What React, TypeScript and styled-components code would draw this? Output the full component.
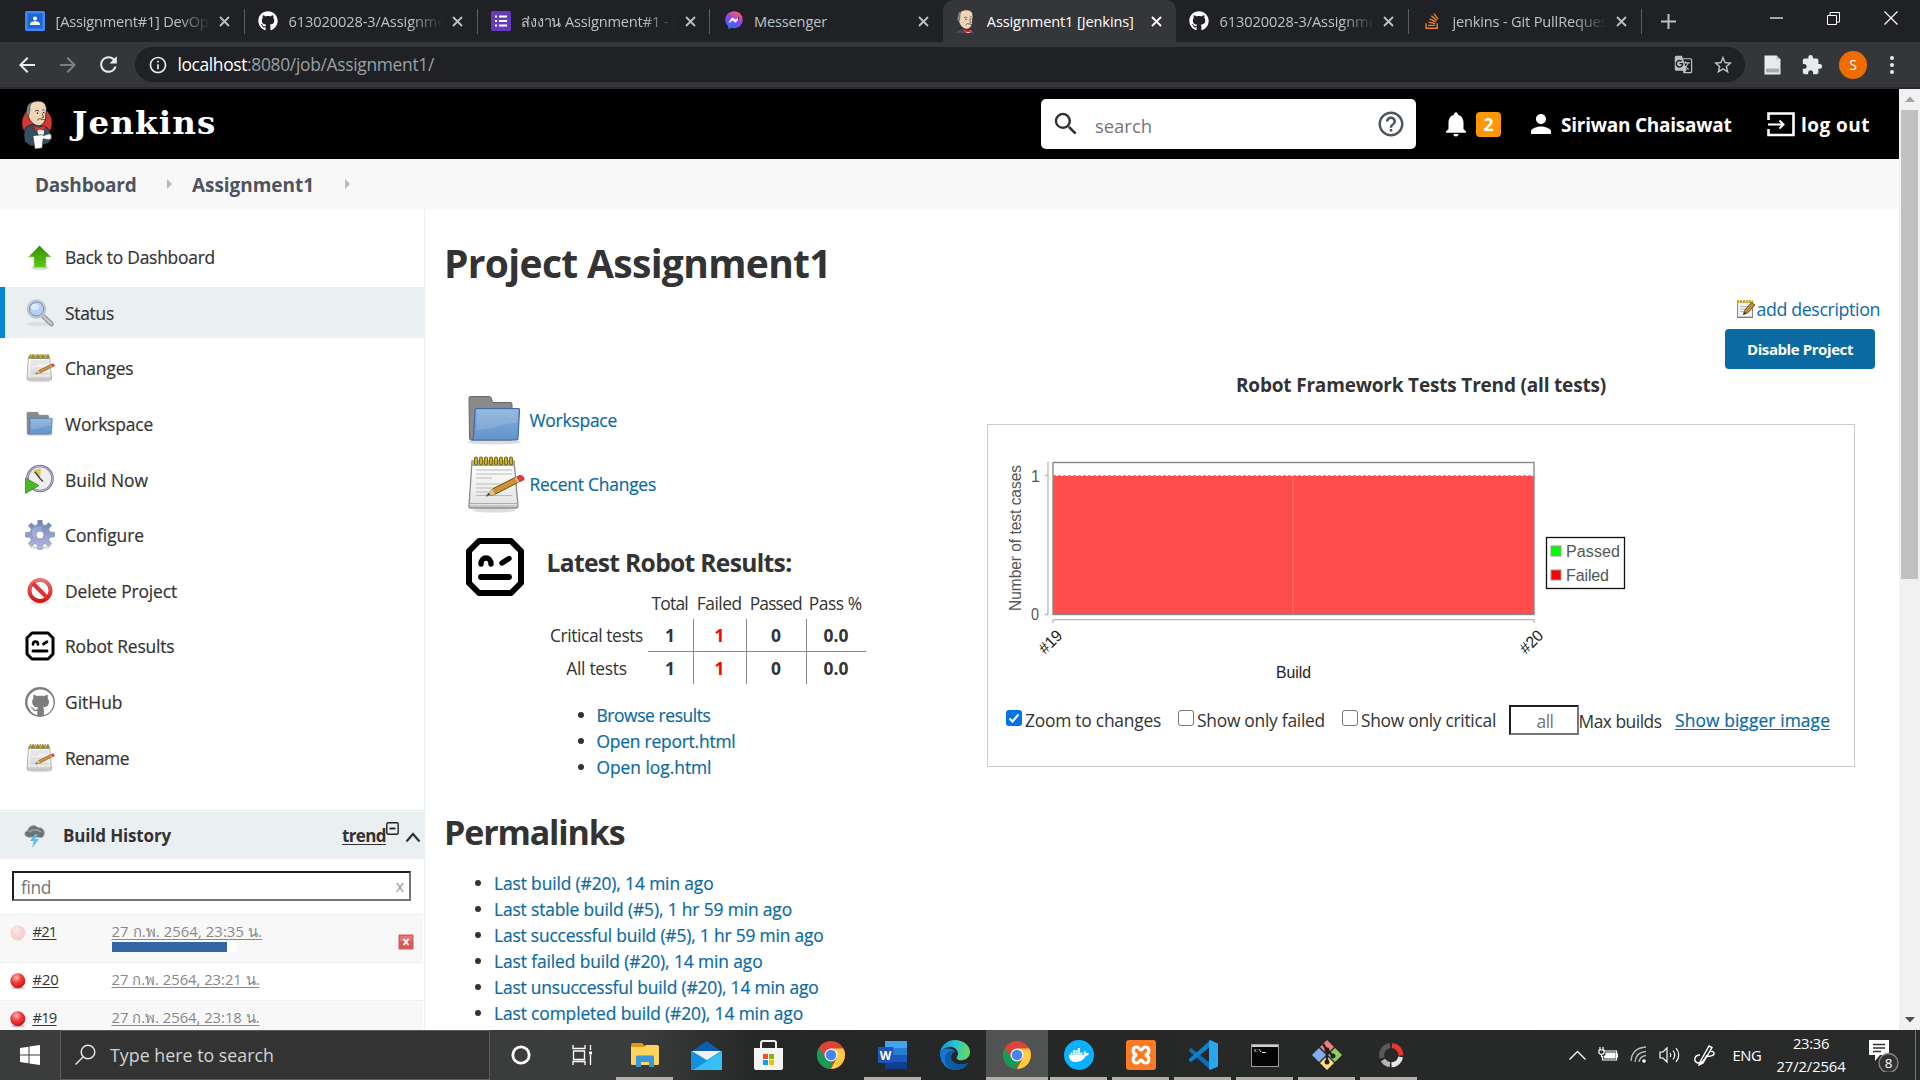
import React, { useLayoutEffect, useRef, useState } from 'react';
import styled, { createGlobalStyle, css } from 'styled-components';
import { FaGithub, FaStackOverflow, FaDocker, FaFacebookMessenger } from 'react-icons/fa';
import { MdGTranslate, MdStarBorder, MdExtension, MdNotifications, MdPerson, MdSearch, MdHelpOutline, MdRefresh, MdInfoOutline, MdArrowBack, MdArrowForward } from 'react-icons/md';

const GlobalStyle = createGlobalStyle`
  * { box-sizing: border-box; }
  body { margin: 0; background: #fff; overflow: hidden; }
  body, input, button { font-family: 'Open Sans', 'Noto Sans', 'DejaVu Sans', sans-serif; }
  svg { display: block; flex: none; }
`;

/* ---------- text that keeps a set measure by tracking ---------- */

const Measured = styled.span`
  display: inline-block;
  white-space: pre;
  text-decoration: inherit;
`;

function Text({ w, children }: { w: number; children: string }) {
  const ref = useRef<HTMLSpanElement>(null);
  const [tracking, setTracking] = useState(0);
  useLayoutEffect(() => {
    const el = ref.current;
    if (!el) return;
    const range = document.createRange();
    range.selectNodeContents(el);
    const natural = range.getBoundingClientRect().width - tracking * children.length;
    setTracking((w - natural) / children.length);
  }, [w, children]);
  return (
    <Measured ref={ref} style={{ letterSpacing: `${tracking}px` }}>
      {children}
    </Measured>
  );
}

/* ---------- window ---------- */

const Screen = styled.div`
  width: 1920px;
  height: 1080px;
  display: flex;
  flex-direction: column;
  overflow: hidden;
  color: #333;
`;

const TabStrip = styled.div`
  height: 42px;
  flex: none;
  display: flex;
  background: #202124;
  padding-left: 12px;
`;

const Tab = styled.div<{ $active?: boolean; $divider?: boolean }>`
  width: 232.8px;
  flex: none;
  display: flex;
  align-items: center;
  padding-left: 13px;
  font-size: 14.6px;
  line-height: 24px;
  color: ${(p) => (p.$active ? '#fff' : '#bdc1c6')};
  background: ${(p) =>
    p.$active ? '#35363a' : p.$divider ? 'linear-gradient(#5a5c60, #5a5c60) right 9px / 1px 25px no-repeat' : 'transparent'};
  border-radius: ${(p) => (p.$active ? '10px 10px 0 0' : '0')};
`;

const TabTitle = styled.span<{ $fade?: boolean }>`
  width: 156px;
  margin-left: 10.6px;
  overflow: hidden;
  white-space: nowrap;
  ${(p) =>
    p.$fade &&
    css`
      mask-image: linear-gradient(90deg, #000 78%, transparent 99%);
    `}
`;

const IconSlot = styled.span<{ $w: number; $h?: number; $ml?: number }>`
  width: ${(p) => p.$w}px;
  height: ${(p) => p.$h ?? p.$w}px;
  margin-left: ${(p) => p.$ml ?? 0}px;
  flex: none;
  display: flex;
  align-items: center;
  justify-content: center;
`;

const NewTab = styled.div`
  width: 54px;
  display: flex;
  align-items: center;
  justify-content: center;
`;

const WindowButtons = styled.div`
  margin-left: auto;
  margin-right: 1px;
  display: flex;
  height: 36px;
`;

const WindowButton = styled.div`
  width: 57px;
  display: flex;
  align-items: center;
  justify-content: center;
`;

const Toolbar = styled.div`
  height: 47px;
  flex: none;
  display: flex;
  align-items: center;
  background: #35363a;
  border-bottom: 2px solid #28292c;
  color: #e8eaed;
`;

const Omnibox = styled.div`
  width: 1610px;
  height: 35px;
  margin-left: 15px;
  border-radius: 18px;
  background: #202124;
  display: flex;
  align-items: center;
  font-size: 17.4px;
  line-height: 35px;
  color: #9aa0a6;
`;

const Host = styled.span`
  margin-left: 10px;
  color: #fff;
`;

const OmniIcons = styled.div`
  margin-left: auto;
  display: flex;
  gap: 18px;
  padding-right: 11px;
  color: #bdc1c6;
`;

const Avatar = styled.div`
  width: 28px;
  height: 28px;
  margin-left: 16px;
  border-radius: 50%;
  background: #ef6c00;
  color: #fff;
  font-size: 14px;
  line-height: 28px;
  text-align: center;
`;

/* ---------- page ---------- */

const Viewport = styled.div`
  height: 941px;
  flex: none;
  display: flex;
`;

const Page = styled.div`
  width: 1899px;
  height: 941px;
  overflow: hidden;
  display: flex;
  flex-direction: column;
  background: #fff;
`;

const Scrollbar = styled.div`
  width: 21px;
  background: #f1f1f1;
  display: flex;
  flex-direction: column;
  align-items: center;
`;

const ScrollArrow = styled.div<{ $down?: boolean }>`
  height: 21px;
  display: flex;
  align-items: center;
  transform: ${(p) => (p.$down ? 'none' : 'rotate(180deg)')};
  color: ${(p) => (p.$down ? '#505050' : '#a3a3a3')};
`;

const ScrollThumb = styled.div`
  width: 17px;
  height: 469px;
  margin-bottom: auto;
  background: #c1c1c1;
`;

const Header = styled.header`
  height: 70px;
  flex: none;
  display: flex;
  align-items: center;
  background: #000;
  color: #fff;
  font-size: 19px;
  font-weight: 700;
  padding-left: 19px;
`;

const Wordmark = styled.span`
  margin-left: 17px;
  font: 700 32.5px/44px 'DejaVu Serif', serif;
  padding-bottom: 3px;
`;

const SearchBox = styled.div`
  width: 375px;
  height: 50px;
  margin-left: auto;
  border-radius: 5px;
  background: #fff;
  color: #757575;
  font-weight: 400;
  display: flex;
  align-items: center;
  padding: 0 11px 0 10px;
`;

const SearchHint = styled.span`
  margin-left: 14px;
  margin-right: auto;
  padding-top: 2px;
  font-size: 18.4px;
`;

const Badge = styled.span`
  width: 25px;
  height: 25px;
  margin-left: 7px;
  border-radius: 4px;
  background: #ff9800;
  font-size: 17.5px;
  line-height: 25px;
  text-align: center;
`;

const HeaderLink = styled.span<{ $gap: number; $end?: number }>`
  display: flex;
  margin-left: ${(p) => p.$gap}px;
  margin-right: ${(p) => p.$end ?? 0}px;
  padding-top: 1px;
`;

const Breadcrumbs = styled.nav`
  height: 50px;
  flex: none;
  display: flex;
  align-items: center;
  padding: 1px 0 0 35px;
  background: #f8f8f8;
  color: #4d545d;
  font-size: 19px;
  font-weight: 700;
`;

const CrumbArrow = styled.span`
  margin: 0 20px 1px 30.5px;
  border-left: 5px solid #b8bcc0;
  border-top: 5px solid transparent;
  border-bottom: 5px solid transparent;
`;

const Body = styled.div`
  flex: 1;
  display: flex;
  min-height: 0;
`;

const Sidebar = styled.aside`
  width: 425px;
  flex: none;
  border-right: 1px solid #eaeff2;
`;

const Tasks = styled.div`
  height: 601px;
  padding-top: 22.4px;
  display: flex;
  flex-direction: column;
  gap: 4.65px;
`;

const Task = styled.div<{ $active?: boolean }>`
  height: 51px;
  display: flex;
  align-items: center;
  padding-left: 20px;
  border-left: 5px solid ${(p) => (p.$active ? '#0b86d3' : 'transparent')};
  background: ${(p) => (p.$active ? '#eaeff2' : 'transparent')};
  font-size: 17.4px;
  -webkit-text-stroke: 0.2px;
`;

const TaskLabel = styled.span`
  margin-left: 10px;
  padding-top: 0.2px;
`;

const HistoryHead = styled.div`
  height: 49px;
  border-top: 1px solid #e6eef0;
  display: flex;
  flex-direction: column;
  padding-top: 1px;
`;

const HistoryBar = styled.div`
  flex: 1;
  display: flex;
  align-items: center;
  padding-left: 24px;
  padding-right: 2px;
  background: #eaeff2;
  font-size: 17px;
  font-weight: 700;
`;

const HistoryTitle = styled.span`
  margin-left: 17px;
`;

const Trend = styled.a`
  margin-left: auto;
  text-decoration: underline;
  text-underline-offset: 2px;
`;

const Sup = styled.span`
  height: 28px;
  margin: 0 6px 0 0;
`;

const FindRow = styled.div`
  height: 55px;
  padding: 12px 13px 0 12px;
`;

const FindBox = styled.div`
  height: 30px;
  border: 2px solid;
  border-color: #1e1e1e #767676 #767676 #1e1e1e;
  display: flex;
  align-items: center;
  justify-content: space-between;
  padding: 1px 5px 0 7px;
  font-size: 17.4px;
  line-height: 22px;
  color: #757575;
`;

const Clear = styled.span`
  font-size: 16px;
  line-height: 20px;
  padding-bottom: 2px;
  color: #999;
`;

const BuildRow = styled.div<{ $h: number; $odd?: boolean }>`
  width: 423px;
  height: ${(p) => p.$h}px;
  display: flex;
  padding: 8px 9px 0;
  border-top: 1px solid #eaeff2;
  background: ${(p) => (p.$odd ? '#f8f8f8' : '#fff')};
  font-size: 14.8px;
  line-height: 16px;
`;

const BuildNumber = styled.a`
  width: 79px;
  margin-left: 6.5px;
  text-decoration: underline;
  text-underline-offset: 2px;
`;

const BuildDate = styled.a`
  color: #888;
  text-decoration: underline;
  text-underline-offset: 2px;
`;

const Progress = styled.div`
  width: 125px;
  height: 10px;
  margin-top: 3px;
  background: linear-gradient(90deg, #3465a4 92%, #fff 92%);
`;

const StopSlot = styled.span`
  margin: 11px 0 0 auto;
`;

const Main = styled.main`
  flex: 1;
  padding: 24px 19px 0 19px;
`;

const Title = styled.h1`
  margin: 0;
  height: 60px;
  font-size: 39px;
  line-height: 60px;
`;

const Description = styled.div`
  height: 32px;
  display: flex;
  align-items: center;
  justify-content: flex-end;
  gap: 1px;
  color: #0b6aa2;
  font-size: 17.8px;
`;

const DisableRow = styled.div`
  display: flex;
  justify-content: flex-end;
  padding: 4px 5px 0 0;
`;

const DisableButton = styled.button`
  width: 150px;
  height: 40px;
  padding: 0;
  border: 0;
  border-radius: 4px;
  background: #0b6aa2;
  color: #fff;
  font-size: 15px;
  font-weight: 700;
`;

const Columns = styled.div`
  display: flex;
  height: 411.4px;
`;

const LeftColumn = styled.div`
  width: 543px;
  padding: 19.4px 0 0 21px;
  font-size: 17.4px;
`;

const ShortcutRow = styled.div`
  height: 64px;
  display: flex;
  align-items: center;
  gap: 4.5px;
  color: #0b6aa2;
  -webkit-text-stroke: 0.2px;
`;

const RobotBlock = styled.div`
  display: flex;
  margin-top: 20.6px;
`;

const RobotBody = styled.div`
  margin-left: 21px;
`;

const RobotTitle = styled.h2`
  margin: 0 0 0 0.5px;
  padding-top: 1px;
  height: 51px;
  font-size: 24.6px;
  line-height: 50px;
`;

const Results = styled.div`
  display: grid;
  grid-template-columns: 102px 46px 53px 60px 59px;
  grid-template-rows: 31px 33px 32.5px;
`;

const Cell = styled.span<{ $right?: boolean; $bottom?: boolean; $strong?: boolean; $failed?: boolean }>`
  display: flex;
  align-items: center;
  justify-content: center;
  padding-right: 1px;
  border-right: ${(p) => (p.$right ? '1px solid #888' : '0')};
  border-bottom: ${(p) => (p.$bottom ? '1px solid #888' : '0')};
  font-weight: ${(p) => (p.$strong ? 700 : 400)};
  color: ${(p) => (p.$failed ? '#f00' : 'inherit')};
`;

const HeadCell = styled(Cell)`
  padding-right: 2.5px;
`;

const Links = styled.ul<{ $indent: number; $top: number }>`
  list-style: none;
  margin: ${(p) => p.$top}px 0 0 ${(p) => p.$indent}px;
  padding: 0;
  font-size: 17.4px;
  -webkit-text-stroke: 0.2px;
  line-height: 26px;
  color: #0b6aa2;
`;

const LinkItem = styled.li`
  display: flex;
  align-items: center;
  height: 26px;
  &::before {
    content: '';
    width: 6px;
    height: 6px;
    margin-right: 13px;
    border-radius: 50%;
    background: #333;
  }
`;

const PermalinksTitle = styled.h2`
  margin: 26.4px 0 0;
  height: 50px;
  font-size: 34px;
  line-height: 50px;
`;

const TrendPanel = styled.section`
  width: 868px;
`;

const TrendTitle = styled.div`
  height: 31px;
  margin-bottom: 24px;
  font-size: 19px;
  line-height: 33px;
  font-weight: 700;
  text-align: center;
`;

const Card = styled.div`
  height: 343px;
  border: 1px solid #ccc;
  padding: 26px 0 0 17px;
`;

const Options = styled.div`
  display: flex;
  align-items: center;
  height: 40px;
  margin-top: 5.5px;
  font-size: 17.4px;
`;

const Check = styled.input`
  appearance: none;
  width: 16px;
  height: 16px;
  margin: 0 3.5px 4px 0;
  border: 1px solid #767676;
  border-radius: 3px;
  background: #fff;
`;

const CheckLabel = styled.label`
  display: flex;
  align-items: center;
  margin-right: 16.5px;
`;

const CheckMark = styled.span`
  display: flex;
  width: 16px;
  height: 16px;
  margin: 0 3px 4px 1px;
  border-radius: 3px;
  background: #0075e8;
`;

const MaxInput = styled.div`
  width: 70px;
  height: 30px;
  margin-left: -4px;
  border: 2px solid;
  border-color: #1e1e1e #767676 #767676 #1e1e1e;
  color: #757575;
  line-height: 29px;
  padding-left: 26px;
`;

const MaxLabel = styled.span`
  padding-top: 2px;
`;

const BiggerLink = styled.a`
  margin-left: 13.5px;
  color: #0b6aa2;
  -webkit-text-stroke: 0.2px;
  text-decoration: underline;
  text-underline-offset: 2px;
`;

/* ---------- taskbar ---------- */

const Taskbar = styled.div`
  height: 50px;
  flex: none;
  display: flex;
  background: linear-gradient(90deg, #3b3c3c 0, #3b3c3c 640px, #252727 760px, #292b2b 100%);
  color: #fff;
`;

const StartButton = styled.div`
  width: 60px;
  display: flex;
  align-items: center;
  justify-content: center;
`;

const TaskSearch = styled.div`
  width: 430px;
  border: 1px solid #5c5c5c;
  background: #333;
  color: #d4d4d4;
  display: flex;
  align-items: center;
  gap: 14px;
  padding-left: 13px;
  font-size: 17.8px;
`;

const AppButton = styled.div<{ $running?: boolean; $active?: boolean }>`
  width: 62px;
  flex: none;
  display: flex;
  align-items: center;
  justify-content: center;
  border-bottom: 3px solid transparent;
  padding: 3px 1px 0 0;
  background: ${(p) => (p.$active ? '#515252' : 'transparent')};
  ${(p) =>
    p.$running &&
    css`
      border-image: linear-gradient(90deg, transparent 5px, #b2aeac 5px, #b2aeac 56px, transparent 56px) 3;
    `}
  ${(p) =>
    p.$active &&
    css`
      border-bottom-color: #b2aeac;
    `}
`;

const Tray = styled.div`
  margin-left: auto;
  display: flex;
  align-items: center;
  padding-right: 4px;
  font-size: 14.8px;
`;

const Clock = styled.div`
  width: 72px;
  margin: 0 22px 0 13px;
  text-align: center;
  line-height: 23px;
`;

const ShowDesktop = styled.div`
  width: 1px;
  height: 50px;
  margin-left: 15px;
  background: #777;
`;

/* ---------- drawings ---------- */

const CloseX = ({ c = '#bdc1c6' }: { c?: string }) => (
  <svg width="11" height="11" viewBox="0 0 11 11" stroke={c} strokeWidth="1.8">
    <path d="M1 1l9 9M10 1l-9 9" />
  </svg>
);

const Butler = ({ w, h, bust }: { w: number; h: number; bust?: boolean }) => (
  <svg width={w} height={h} viewBox={bust ? '5 0 25 30' : '0 0 34 48'} preserveAspectRatio="xMidYMid meet">
    {!bust && <ellipse cx="17" cy="22.5" rx="14.5" ry="15.5" fill="#d33833" />}
    <path d="M5 41c-1-6-1-11 1-14 2-2 5-3 9-3l9 2c4 1 6 4 6 8l1 5-3 3-8 3h-9z" fill="#335061" stroke="#111" strokeWidth=".7" />
    <path d="M16 26l5 3 4-3-2 10h-4z" fill="#f2f2f2" />
    <path d="M8 14C6 6 11 1 18 1c7 0 9 5 8 11-1 3 0 5-1 8-2 4-5 6-8 5-4-1-8-5-9-11z" fill="#f0d6b7" stroke="#222" strokeWidth=".9" />
    <path d="M9 15c-3 1-3-3-2-5 0-4 2-7 5-8-2 3-2 5-2 8z" fill="#8a888a" stroke="#222" strokeWidth=".5" />
    <path d="M15 11q2-2 4 0M22 10q1.500-1 2.500 0M17 20q2-3 5-1l3 .5M22 13l1.500 4-2 .5" stroke="#49414b" strokeWidth=".9" fill="none" />
    <circle cx="17.500" cy="12.800" r=".8" fill="#222" />
    <circle cx="23.500" cy="12.300" r=".8" fill="#222" />
    <path d="M14 25l5 2 5-2 1 5-5-1.500-5 2z" fill="#d33833" stroke="#811" strokeWidth=".5" />
    {!bust && <path d="M13 35l9-1 1 1 6-2 2 1v4l-3 1-5-1-1 9-7 1z" fill="#fff" stroke="#333" strokeWidth=".6" />}
  </svg>
);

const ClassroomIcon = () => (
  <svg width="20" height="20" viewBox="0 0 20 20">
    <rect width="20" height="20" rx="1.5" fill="#4285f4" />
    <rect x="2.5" y="2.5" width="15" height="15" fill="#1967d2" />
    <circle cx="10" cy="7.6" r="2" fill="#fff" />
    <path d="M5 14c0-3 2.500-3.700 5-3.700s5 .7 5 3.700z" fill="#fff" />
  </svg>
);

const FormsIcon = () => (
  <svg width="20" height="20" viewBox="0 0 20 20">
    <rect width="20" height="20" rx="1.5" fill="#673ab7" />
    <path d="M4 5.500h2M8 5.500h8M4 10h2M8 10h8M4 14.500h2M8 14.500h8" stroke="#fff" strokeWidth="2.200" />
  </svg>
);

const MessengerIcon = () => (
  <svg width="20" height="20" viewBox="0 0 20 20">
    <defs>
      <linearGradient id="msg" x1=".2" y1="1" x2=".7" y2="0">
        <stop offset="0" stopColor="#0a84ff" />
        <stop offset=".5" stopColor="#8a3ff5" />
        <stop offset="1" stopColor="#ff5f70" />
      </linearGradient>
    </defs>
    <path d="M5 6h10v8H5z" fill="#fff" />
    <FaFacebookMessenger x={2} size={18} fill="url(#msg)" />
  </svg>
);

const ArrowUpIcon = () => (
  <svg width="30" height="30" viewBox="0 0 30 30">
    <defs>
      <linearGradient id="up" x1="0" y1="0" x2="0" y2="1">
        <stop offset="0" stopColor="#2f8f08" />
        <stop offset="1" stopColor="#5fc80f" />
      </linearGradient>
    </defs>
    <ellipse cx="15" cy="26" rx="9" ry="2" fill="#0002" />
    <path d="M14.500 3.500L26 15h-5v10.500H9V15H3.500z" fill="url(#up)" stroke="#9fd58a" strokeWidth=".8" />
  </svg>
);

const MagnifierIcon = () => (
  <svg width="30" height="30" viewBox="0 0 30 30">
    <ellipse cx="13" cy="26" rx="11" ry="2.300" fill="#0001" />
    <path d="M18 18l8.500 8" stroke="#8a8a8a" strokeWidth="4.500" strokeLinecap="round" />
    <path d="M18 18l8.500 8" stroke="#c9c9c9" strokeWidth="2.500" strokeLinecap="round" />
    <circle cx="11.500" cy="11" r="8.500" fill="#a9c9ee" stroke="#c4c6c8" strokeWidth="2.600" />
    <circle cx="11.500" cy="11" r="7" fill="#b6d2f3" stroke="#6d93c8" strokeWidth="1" />
    <ellipse cx="10" cy="9" rx="4" ry="3" fill="#dcebfb" />
  </svg>
);

const NotepadIcon = ({ size }: { size: number }) => (
  <svg width={size} height={size} viewBox="0 0 60 60">
    <defs>
      <linearGradient id="paper" x1="0" y1="0" x2="0" y2="1">
        <stop offset="0" stopColor="#fff" />
        <stop offset="1" stopColor="#e2e2e2" />
      </linearGradient>
    </defs>
    <ellipse cx="29" cy="56.500" rx="22" ry="2" fill="#0002" />
    <path d="M7 7h42l4 45q0 2-2 2H6q-2.500 0-2-2z" fill="url(#paper)" stroke="#8a8a8a" strokeWidth="1.300" />
    <path d="M7 7h42l.5 5h-43z" fill="#a9a9a9" />
    <path d="M5 49.500h48M5 52h48" stroke="#aaa" strokeWidth="1" />
    <path d="M11 4.500v5M16 4.500v5M21 4.500v5M26 4.500v5M31 4.500v5M36 4.500v5M41 4.500v5M46 4.500v5" stroke="#7d6a08" strokeWidth="4" strokeLinecap="round" />
    <path d="M11 4.500v5M16 4.500v5M21 4.500v5M26 4.500v5M31 4.500v5M36 4.500v5M41 4.500v5M46 4.500v5" stroke="#d0ba31" strokeWidth="1.800" strokeLinecap="round" />
    <path d="M11 16h36M11 20h36M11 24h16M11 30h30M11 34h30M11 38h12M11 41.500h36" stroke="#b9b9b9" strokeWidth="1.100" />
    <path d="M21 42l6.500-7L51 23l3 5-24.500 12.500z" fill="#cf9133" stroke="#704c12" strokeWidth="1" />
    <path d="M21 42l6.500-7 2.500 5.500z" fill="#e0c68d" />
    <path d="M21 42l3-3 1 1.500z" fill="#222" />
    <path d="M51.500 22.800l3.500-1.500q4.500.500 4 4.500L54.500 28z" fill="#ef3a34" stroke="#8c2a1a" strokeWidth=".6" />
    <path d="M49.500 23.800l2-1 3 5.300-2 1z" fill="#c8b8a8" />
  </svg>
);

const SmallNotepadIcon = () => (
  <svg width="20" height="20" viewBox="0 0 20 20">
    <path d="M1.500 3h15v15.500h-15z" fill="#f0f0ee" stroke="#8a8a85" />
    <path d="M1.500 18.300h15.500" stroke="#777" strokeWidth="1.200" />
    <path d="M1 2.500h16" stroke="#c8a92d" strokeWidth="3" strokeDasharray="2 1" />
    <path d="M4 7.500h8M4 10h6M4 12.500h4" stroke="#bbb" />
    <path d="M7.500 15.500l1-4 7-8 3.500 2.500-7.500 8z" fill="#c08a3a" stroke="#5d431c" strokeWidth=".9" />
    <path d="M7.500 15.500l.7-2.500 1.800 1z" fill="#222" />
  </svg>
);

const FolderIcon = ({ size }: { size: number }) => (
  <svg width={size} height={size} viewBox="0 0 60 60">
    <defs>
      <linearGradient id="fold" x1="0" y1="0" x2="0" y2="1">
        <stop offset="0" stopColor="#86aeda" />
        <stop offset="1" stopColor="#6394cc" />
      </linearGradient>
    </defs>
    <ellipse cx="29" cy="52" rx="27" ry="2.500" fill="#0002" />
    <path d="M4 8q0-1.500 1.500-1.500H24q2 0 2.500 2l1 4h18q1.500 0 1.500 1.500V50H6q-1.500 0-1.500-2z" fill="#8a8a8a" stroke="#666" strokeWidth="1" />
    <path d="M10 20q0-1.500 1.500-1.500H53q2 0 1.500 1.500L53 48q0 2-2 2H6.500q2-1 2-3z" fill="url(#fold)" stroke="#3c6ba8" strokeWidth="1.200" />
    <path d="M12 20h41l-.6 13C40 32 30 40 11.500 40z" fill="#fff2" />
  </svg>
);

const BuildNowIcon = () => (
  <svg width="30" height="30" viewBox="0 0 30 30">
    <circle cx="15" cy="14.500" r="12.500" fill="#eeeeec" stroke="#76749a" strokeWidth="2.600" />
    <circle cx="15" cy="14.500" r="12.500" fill="none" stroke="#c5c4d8" strokeWidth=".9" />
    <path d="M15 14.500L8 7q4-3 8-2.500z" fill="#dcc65a" />
    <path d="M15 14.500L10 8M15 14.500l3 3" stroke="#444" strokeWidth="1.400" />
    <path d="M.5 14l13.500 7.500L.5 29.500z" fill="#4fb52a" stroke="#3d8f1f" strokeWidth=".8" />
  </svg>
);

const GearIcon = () => (
  <svg width="30" height="30" viewBox="0 0 30 30">
    <defs>
      <linearGradient id="gear" x1="0" y1="0" x2="0" y2="1">
        <stop offset="0" stopColor="#6585b8" />
        <stop offset="1" stopColor="#bdb8dc" />
      </linearGradient>
    </defs>
    <ellipse cx="15" cy="27.500" rx="10" ry="1.800" fill="#0002" />
    <path d="M12.600 4.500L13 0h4l.4 4.500 2.800 1.200 3.500-3 2.900 2.900-3 3.500 1.200 2.800 4.700.6v4.300l-4.700.5-1.200 2.800 3 3.500-2.900 2.900-3.500-3-2.800 1.200-.4 4.500h-4l-.4-4.500-2.800-1.200-3.500 3-2.900-2.900 3-3.500-1.200-2.800L.500 17v-4.300l4.700-.6 1.200-2.800-3-3.500 2.900-2.900 3.500 3z" fill="url(#gear)" stroke="#8494b8" strokeWidth=".8" strokeLinejoin="round" />
    <path d="M8 8q5-3 10-1l-8 11q-5-4-2-10z" fill="#fff3" />
    <circle cx="15" cy="15" r="4" fill="#fff" stroke="#7a86ab" strokeWidth=".7" />
  </svg>
);

const NoEntryIcon = () => (
  <svg width="30" height="30" viewBox="0 0 30 30">
    <defs>
      <linearGradient id="no" x1="0" y1="0" x2="0" y2="1">
        <stop offset="0" stopColor="#ea7070" />
        <stop offset="1" stopColor="#d81414" />
      </linearGradient>
    </defs>
    <ellipse cx="15" cy="27" rx="10" ry="1.500" fill="#0002" />
    <circle cx="15" cy="14.500" r="10.500" fill="#fff" stroke="url(#no)" strokeWidth="4" />
    <path d="M8 7.500l14 14" stroke="#dc3434" strokeWidth="4" />
  </svg>
);

const RobotIcon = ({ size }: { size: number }) => (
  <svg width={size} height={size} viewBox="0 0 60 60" fill="none" stroke="#000">
    <path d="M14 4h32L56 14v32L46 56H14L4 46V14z" strokeWidth="6" strokeLinejoin="round" />
    <path d="M16 27c0-8 10-8 10 0M37 26l7-4.500" strokeWidth="5.400" strokeLinecap="round" />
    <path d="M16 40h28" strokeWidth="5.800" strokeLinecap="round" />
  </svg>
);

const GithubDisc = styled.span`
  width: 30px;
  height: 30px;
  border-radius: 50%;
  background: #7d7d7d;
  display: flex;
  align-items: center;
  justify-content: center;
  color: #fff;
`;

const StormIcon = () => (
  <svg width="22" height="26" viewBox="0 0 22 26">
    <path d="M4 14c-4-1-4-6 0-6 0-5 7-7 10-3 4-1 7 3 6 6 0 3-3 4-5 3z" fill="#6d7072" stroke="#8d8f91" />
    <path d="M5 9c3-3 9-3 12 0" stroke="#9a9c9e" fill="none" strokeWidth="2" />
    <path d="M11 11l-5 7h4l-2 7 7-9h-4l3-5z" fill="#5ebaf0" />
  </svg>
);

const Ball = ({ faded }: { faded?: boolean }) => (
  <svg width="17" height="19" viewBox="0 0 17 19" opacity={faded ? 0.18 : 1}>
    <defs>
      <radialGradient id="ball" cx=".4" cy=".3" r=".7">
        <stop offset="0" stopColor="#ffb8b8" />
        <stop offset=".5" stopColor="#f23c3c" />
        <stop offset="1" stopColor="#d01515" />
      </radialGradient>
    </defs>
    <ellipse cx="9" cy="17" rx="7" ry="1.500" fill="#0003" />
    <circle cx="8.800" cy="9.700" r="7.500" fill="url(#ball)" />
  </svg>
);

const StopIcon = () => (
  <svg width="16" height="16" viewBox="0 0 16 16">
    <rect x=".5" y=".5" width="15" height="15" rx="1" fill="#d95858" stroke="#e8a8a8" />
    <path d="M2 2h12v5H2z" fill="#fff3" />
    <path d="M5.500 5l5 6M10.500 5l-5 6" stroke="#fff" strokeWidth="1.900" />
  </svg>
);

const Chart = () => (
  <svg width="660" height="243" viewBox="1005 451 660 243" fontFamily="'Liberation Sans', sans-serif" fontSize="16" fill="#555">
    <rect x="1053" y="462.500" width="481" height="152" fill="#fff" />
    <rect x="1053" y="476" width="481" height="138" fill="#ff4d4d" />
    <path d="M1293 476v138" stroke="#ff6a62" strokeWidth="1.500" />
    <path d="M1053 475.500h481" stroke="#c99" strokeDasharray="3 2" />
    <rect x="1053" y="462.500" width="481" height="152" fill="none" stroke="#888" strokeWidth="1.400" />
    <path d="M1048 462v153M1045 475.500h3M1045 614.500h3M1053 619.700h481.500M1053 620v3M1534 620v3" stroke="#b8b8b8" strokeWidth="1.300" fill="none" />
    <text x="1031" y="481.500">1</text>
    <text x="1031" y="620" textLength="8" lengthAdjust="spacingAndGlyphs">0</text>
    <text transform="translate(1021 611) rotate(-90)" textLength="146" lengthAdjust="spacingAndGlyphs">Number of test cases</text>
    <text transform="translate(1045 655) rotate(-45)" fill="#222" textLength="26" lengthAdjust="spacingAndGlyphs">#19</text>
    <text transform="translate(1526 655) rotate(-45)" fill="#222" textLength="26" lengthAdjust="spacingAndGlyphs">#20</text>
    <text x="1276" y="678" fill="#222" textLength="35" lengthAdjust="spacingAndGlyphs">Build</text>
    <rect x="1546.500" y="537.500" width="78" height="51" fill="#fff" stroke="#111" strokeWidth="1.300" />
    <rect x="1551" y="546" width="10" height="10" fill="#0f0" stroke="#999" />
    <rect x="1551" y="570" width="10" height="10" fill="#f00" stroke="#999" />
    <text x="1566" y="556.500" textLength="54">Passed</text>
    <text x="1566" y="580.500" textLength="43">Failed</text>
  </svg>
);

const ChromeIcon = () => (
  <svg width="28" height="28" viewBox="0 0 28 28">
    <circle cx="14" cy="14" r="14" fill="#db4437" />
    <path d="M19.700 17.300L14 28A14 14 0 0 0 26.300 7.400H14z" fill="#ffcd40" />
    <path d="M14 28A14 14 0 0 1 1.900 7L8.300 17.300 14 20.600l2.500-.5-3.500 7.900z" fill="#0f9d58" />
    <circle cx="14" cy="14" r="6.500" fill="#f1f1f1" />
    <circle cx="14" cy="14" r="5.200" fill="#4285f4" />
  </svg>
);

const ExplorerIcon = () => (
  <svg width="30" height="26" viewBox="0 0 30 26">
    <path d="M1 3q0-2 2-2h9l3 3h12q2 0 2 2v16H1z" fill="#e09b0a" />
    <path d="M1 5h13l2-2h11q2 0 2 2v17q0 1-2 1H3q-2 0-2-1z" fill="#ffd45e" />
    <path d="M6 25V15q0-1.500 1.500-1.500h15q1.500 0 1.500 1.500v10h-5v-5h-8v5z" fill="#3b97dd" />
  </svg>
);

const MailIcon = () => (
  <svg width="31" height="29" viewBox="0 0 31 29">
    <path d="M0 11L15.500 0 31 11z" fill="#0a5fb0" />
    <path d="M0 10h31v19H0z" fill="#26aef0" />
    <path d="M1 10h29L16 19z" fill="#f2f2f2" />
    <path d="M0 10l16 10L2 29H0z" fill="#1490df" />
    <path d="M31 11v18H2z" fill="#3cc4fb" opacity=".75" />
  </svg>
);

const StoreIcon = () => (
  <svg width="29" height="30" viewBox="0 0 29 30">
    <path d="M7 9V3q0-2 2-2h11q2 0 2 2v6" fill="none" stroke="#eee" strokeWidth="2" />
    <path d="M0 8h29v20q0 2-2 2H2q-2 0-2-2z" fill="#f4f4f4" />
    <path d="M9 14h5v5H9z" fill="#f25022" />
    <path d="M15 14h5v5h-5z" fill="#7fba00" />
    <path d="M9 20h5v5H9z" fill="#00a4ef" />
    <path d="M15 20h5v5h-5z" fill="#ffb900" />
  </svg>
);

const WordIcon = () => (
  <svg width="30" height="28" viewBox="0 0 30 28">
    <path d="M7 0h22v7H7z" fill="#41a5ee" />
    <path d="M7 7h22v7H7z" fill="#2b7cd3" />
    <path d="M7 14h22v7H7z" fill="#185abd" />
    <path d="M7 21h22v6q0 1-1 1H8q-1 0-1-1z" fill="#103f91" />
    <rect y="6" width="15" height="16" rx="1" fill="#1c56b5" />
    <text x="7.500" y="18.500" textAnchor="middle" fontSize="12" fontWeight="700" fill="#fff" fontFamily="'Open Sans', sans-serif">W</text>
  </svg>
);

const EdgeIcon = () => (
  <svg width="30" height="30" viewBox="0 0 30 30">
    <defs>
      <linearGradient id="edge" x1="0" y1=".4" x2="1" y2=".5">
        <stop offset="0" stopColor="#1593dc" />
        <stop offset=".5" stopColor="#2dc3cf" />
        <stop offset="1" stopColor="#6be04b" />
      </linearGradient>
    </defs>
    <path d="M15 0C6 0 0 7 0 14c2-5 7-8 12-7 4 1 6 4 6 7 0 2-2 3-1 5 3 3 13 1 13-7C30 5 23 0 15 0z" fill="url(#edge)" />
    <path d="M0 14c0 9 7 16 15 16 5 0 10-2 13-7-7 3-17 2-17-6 0-3 2-5 4-6C9 6 0 9 0 14z" fill="#1378cf" />
    <path d="M11 17c-1-3 1-5 3-6-5-1-9 3-9 8 0 6 5 11 11 11 5 0 9-3 12-7-7 3-16 2-17-6z" fill="#0c59a4" />
  </svg>
);

const DockerDisc = styled.span`
  width: 30px;
  height: 30px;
  border-radius: 50%;
  background: #0db0ff;
  display: flex;
  align-items: center;
  justify-content: center;
`;

const XamppIcon = () => (
  <svg width="30" height="30" viewBox="0 0 30 30">
    <rect width="30" height="30" rx="3" fill="#fb7a24" />
    <path d="M11 15c-5-1-5-8-.5-8 3.500 0 2.500 3 4.500 3s1-3 4.500-3c4.500 0 4.500 7-.5 8 5 1 5 8 .5 8-3.500 0-2.500-3-4.500-3s-1 3-4.500 3c-4.500 0-4.500-7 .5-8z" fill="none" stroke="#fff" strokeWidth="3.200" />
  </svg>
);

const CodeIcon = () => (
  <svg width="30" height="30" viewBox="0 0 30 30">
    <path d="M1 9.500L3 8l19 15v6.500L1 11z" fill="#0b6fb8" />
    <path d="M1 20.500L3 22 22 7V.5L1 19z" fill="#0c82cf" />
    <path d="M22 0l8 3.500v23L22 30q-1 0-1-2V2q0-2 1-2z" fill="#2aa5ef" />
  </svg>
);

const TerminalIcon = () => (
  <svg width="28" height="23" viewBox="0 0 28 23">
    <rect x=".5" y=".5" width="27" height="22" fill="#050505" stroke="#9a9a9a" />
    <path d="M1 2h26" stroke="#cfcfcf" strokeWidth="2" />
    <path d="M4 5v3M6 5.500v.5M6 7.500v.5M8 5l2 3M11 8.500h4" stroke="#ddd" />
  </svg>
);

const GitIcon = () => (
  <svg width="30" height="30" viewBox="0 0 30 30">
    <path d="M15 0l7 7-7 7-7-7z" fill="#f08080" />
    <path d="M23 8l7 7-7 7-7-7z" fill="#8fd05c" />
    <path d="M7 8l7 7-7 7-7-7z" fill="#80aef5" />
    <path d="M15 16l7 7-7 7-7-7z" fill="#ffe07a" />
    <path d="M11 4l4 6v12M15 10l6 6" stroke="#222" strokeWidth="2.400" fill="none" />
    <circle cx="15" cy="10" r="2.500" fill="#222" />
    <circle cx="21" cy="16" r="2.500" fill="#222" />
    <circle cx="15" cy="22" r="2.500" fill="#222" />
  </svg>
);

const RingIcon = () => (
  <svg width="30" height="26" viewBox="-4 0 30 26" fill="none" strokeWidth="5">
    <path d="M14 3.500A9.800 9.800 0 0 1 22.800 13.500" stroke="#e33b2a" />
    <path d="M22.700 15A9.800 9.800 0 0 1 13.500 22.800" stroke="#e6e6e6" />
    <path d="M12 22.700A9.800 9.800 0 0 1 5 18" stroke="#b5b5b5" />
    <path d="M4 16A9.800 9.800 0 0 1 12 3.500" stroke="#5a5a5a" />
  </svg>
);

/* ---------- data ---------- */

const tabs = [
  { icon: <ClassroomIcon />, title: '[Assignment#1] DevOp', w: 153, fade: true, divider: true },
  { icon: <FaGithub size={20} color="#fff" />, title: '613020028-3/Assignme', w: 157, fade: true, divider: true },
  { icon: <FormsIcon />, title: 'ส่งงาน Assignment#1 - [', w: 155, fade: true, divider: true },
  { icon: <MessengerIcon />, title: 'Messenger', w: 73 },
  { icon: <Butler w={20} h={24} bust />, title: 'Assignment1 [Jenkins]', w: 147, active: true },
  { icon: <FaGithub size={20} color="#fff" />, title: '613020028-3/Assignme', w: 157, fade: true, divider: true },
  { icon: <FaStackOverflow size={18} color="#f48024" />, title: 'jenkins - Git PullReques', w: 155, fade: true, divider: true },
];

const tasks = [
  { icon: <ArrowUpIcon />, label: 'Back to Dashboard', w: 150 },
  { icon: <MagnifierIcon />, label: 'Status', w: 49, active: true },
  { icon: <NotepadIcon size={30} />, label: 'Changes', w: 68.5 },
  { icon: <FolderIcon size={30} />, label: 'Workspace', w: 88 },
  { icon: <BuildNowIcon />, label: 'Build Now', w: 83 },
  { icon: <GearIcon />, label: 'Configure', w: 79 },
  { icon: <NoEntryIcon />, label: 'Delete Project', w: 112 },
  { icon: <RobotIcon size={30} />, label: 'Robot Results', w: 109.500 },
  { icon: <GithubDisc><FaGithub size={27} /></GithubDisc>, label: 'GitHub', w: 57.5 },
  { icon: <NotepadIcon size={30} />, label: 'Rename', w: 64 },
];

const permalinks = [
  ['Last build (#20), 14 min ago', 219.500],
  ['Last stable build (#5), 1 hr 59 min ago', 298],
  ['Last successful build (#5), 1 hr 59 min ago', 329.500],
  ['Last failed build (#20), 14 min ago', 268.500],
  ['Last unsuccessful build (#20), 14 min ago', 324.500],
  ['Last completed build (#20), 14 min ago', 309],
] as const;

const robotLinks = [
  ['Browse results', 114],
  ['Open report.html', 139],
  ['Open log.html', 115],
] as const;

const apps: { icon: React.ReactNode; running?: boolean; active?: boolean }[] = [
  { icon: <ExplorerIcon />, running: true },
  { icon: <MailIcon /> },
  { icon: <StoreIcon /> },
  { icon: <ChromeIcon /> },
  { icon: <WordIcon />, running: true },
  { icon: <EdgeIcon /> },
  { icon: <ChromeIcon />, active: true },
  { icon: <DockerDisc><FaDocker size={20} color="#fff" /></DockerDisc>, running: true },
  { icon: <XamppIcon />, running: true },
  { icon: <CodeIcon />, running: true },
  { icon: <TerminalIcon />, running: true },
  { icon: <GitIcon />, running: true },
  { icon: <RingIcon />, running: true },
];

/* ---------- sections ---------- */

const Browser = () => (
  <>
    <TabStrip>
      {tabs.map((t, i) => (
        <Tab key={i} $active={t.active} $divider={t.divider}>
          <IconSlot $w={20}>{t.icon}</IconSlot>
          <TabTitle $fade={t.fade}>
            <Text w={t.w}>{t.title}</Text>
          </TabTitle>
          <IconSlot $w={12} $ml={7.4}>
            <CloseX c={t.active ? '#fff' : undefined} />
          </IconSlot>
        </Tab>
      ))}
      <NewTab>
        <svg width="15" height="15" stroke="#bdc1c6" strokeWidth="2">
          <path d="M7.500 0v15M0 7.500h15" />
        </svg>
      </NewTab>
      <WindowButtons>
        <WindowButton>
          <svg width="13" height="2"><path d="M0 1h13" stroke="#fff" strokeWidth="1.200" /></svg>
        </WindowButton>
        <WindowButton>
          <svg width="13" height="13" fill="none" stroke="#fff">
            <path d="M.5 3.500h9v9h-9zM3 3V.5h9.500V10H10" />
          </svg>
        </WindowButton>
        <WindowButton>
          <svg width="14" height="14" stroke="#fff" strokeWidth="1.200"><path d="M.5.500l13 13M13.500.500l-13 13" /></svg>
        </WindowButton>
      </WindowButtons>
    </TabStrip>
    <Toolbar>
      <IconSlot $w={24} $ml={15}><MdArrowBack size={24} /></IconSlot>
      <IconSlot $w={24} $ml={17}><MdArrowForward size={24} color="#7d7f83" /></IconSlot>
      <IconSlot $w={24} $ml={16}><MdRefresh size={25} /></IconSlot>
      <Omnibox>
        <IconSlot $w={20} $ml={12.5}><MdInfoOutline size={20} color="#e8eaed" /></IconSlot>
        <Host><Text w={69.500}>localhost</Text></Host>
        <Text w={187}>:8080/job/Assignment1/</Text>
        <OmniIcons>
          <IconSlot $w={22}><MdGTranslate size={19} /></IconSlot>
          <IconSlot $w={22}><MdStarBorder size={22} /></IconSlot>
        </OmniIcons>
      </Omnibox>
      <IconSlot $w={20} $ml={17}>
        <svg width="17" height="20"><path d="M.5.500h12l4 4v15H.500z" fill="#e8eaed" /><path d="M2 13.500h13v4H2z" fill="#a9abae" /><path d="M12.500.500v4h4z" fill="#bbb" /></svg>
      </IconSlot>
      <IconSlot $w={22} $ml={19}><MdExtension size={22} /></IconSlot>
      <Avatar>S</Avatar>
      <IconSlot $w={6} $h={20} $ml={22}>
        <svg width="4" height="20" fill="#e8eaed"><circle cx="2" cy="3" r="2" /><circle cx="2" cy="10" r="2" /><circle cx="2" cy="17" r="2" /></svg>
      </IconSlot>
    </Toolbar>
  </>
);

const PageHeader = () => (
  <Header>
    <Butler w={36} h={49} />
    <Wordmark><Text w={144.500}>Jenkins</Text></Wordmark>
    <SearchBox>
      <IconSlot $w={30}><MdSearch size={30} color="#333" /></IconSlot>
      <SearchHint><Text w={57}>search</Text></SearchHint>
      <IconSlot $w={28}><MdHelpOutline size={30} color="#4d545d" /></IconSlot>
    </SearchBox>
    <IconSlot $w={27} $ml={26}><MdNotifications size={30} /></IconSlot>
    <Badge>2</Badge>
    <IconSlot $w={30} $ml={25}><MdPerson size={30} /></IconSlot>
    <HeaderLink $gap={5}><Text w={170.500}>Siriwan Chaisawat</Text></HeaderLink>
    <IconSlot $w={28} $ml={35.5}>
      <svg width="28" height="25" viewBox="0 0 28 25" fill="none" stroke="#fff" strokeWidth="2.600">
        <path d="M1.500 8V1.500h25v21.500h-25V17" />
        <path d="M1 12.500h15M12.500 8.500l4 4-4 4" strokeWidth="2" />
      </svg>
    </IconSlot>
    <HeaderLink $gap={6} $end={29}><Text w={69}>log out</Text></HeaderLink>
  </Header>
);

const SidePanel = () => (
  <Sidebar>
    <Tasks>
      {tasks.map((t) => (
        <Task key={t.label} $active={t.active}>
          <IconSlot $w={30}>{t.icon}</IconSlot>
          <TaskLabel><Text w={t.w}>{t.label}</Text></TaskLabel>
        </Task>
      ))}
    </Tasks>
    <HistoryHead>
      <HistoryBar>
        <StormIcon />
        <HistoryTitle><Text w={108}>Build History</Text></HistoryTitle>
        <Trend><Text w={44}>trend</Text></Trend>
        <Sup>
          <svg width="13" height="13" fill="none" stroke="#222" strokeWidth="1.400"><rect x=".8" y=".8" width="11.400" height="11.400" rx="1.500" /><path d="M3.500 6.500h6" strokeWidth="1.800" /></svg>
        </Sup>
        <svg width="17" height="12" fill="none" stroke="#333" strokeWidth="2.200"><path d="M1.500 11.500L8 4l6.500 7.500" /></svg>
      </HistoryBar>
    </HistoryHead>
    <FindRow>
      <FindBox>
        <Text w={30}>find</Text>
        <Clear>x</Clear>
      </FindBox>
    </FindRow>
    <BuildRow $h={48} $odd>
      <Ball faded />
      <BuildNumber><Text w={24}>#21</Text></BuildNumber>
      <div>
        <BuildDate><Text w={150.500}>27 ก.พ. 2564, 23:35 น.</Text></BuildDate>
        <Progress />
      </div>
      <StopSlot><StopIcon /></StopSlot>
    </BuildRow>
    <BuildRow $h={38}>
      <Ball />
      <BuildNumber><Text w={26}>#20</Text></BuildNumber>
      <BuildDate><Text w={148}>27 ก.พ. 2564, 23:21 น.</Text></BuildDate>
    </BuildRow>
    <BuildRow $h={38} $odd>
      <Ball />
      <BuildNumber><Text w={24}>#19</Text></BuildNumber>
      <BuildDate><Text w={148}>27 ก.พ. 2564, 23:18 น.</Text></BuildDate>
    </BuildRow>
  </Sidebar>
);

const ResultRow = ({ label, w, bottom }: { label: string; w: number; bottom?: boolean }) => (
  <>
    <Cell><Text w={w}>{label}</Text></Cell>
    <Cell $strong $right $bottom={bottom}>1</Cell>
    <Cell $strong $right $bottom={bottom} $failed>1</Cell>
    <Cell $strong $right $bottom={bottom}>0</Cell>
    <Cell $strong $bottom={bottom}><Text w={25}>0.0</Text></Cell>
  </>
);

const Project = () => (
  <Main>
    <Title><Text w={387}>Project Assignment1</Text></Title>
    <Description>
      <SmallNotepadIcon />
      <Text w={123.500}>add description</Text>
    </Description>
    <DisableRow>
      <DisableButton><Text w={106}>Disable Project</Text></DisableButton>
    </DisableRow>
    <Columns>
      <LeftColumn>
        <ShortcutRow><FolderIcon size={60} /><Text w={87.500}>Workspace</Text></ShortcutRow>
        <ShortcutRow><NotepadIcon size={60} /><Text w={126.500}>Recent Changes</Text></ShortcutRow>
        <RobotBlock>
          <RobotIcon size={60} />
          <RobotBody>
            <RobotTitle><Text w={245}>Latest Robot Results:</Text></RobotTitle>
            <Results>
              <Cell />
              <HeadCell><Text w={36.500}>Total</Text></HeadCell>
              <HeadCell><Text w={45}>Failed</Text></HeadCell>
              <HeadCell><Text w={52}>Passed</Text></HeadCell>
              <HeadCell><Text w={53}>Pass %</Text></HeadCell>
              <ResultRow label="Critical tests" w={93} bottom />
              <ResultRow label="All tests" w={60.500} />
            </Results>
            <Links $indent={31.5} $top={17.4}>
              {robotLinks.map(([label, w]) => (
                <LinkItem key={label}><Text w={w}>{label}</Text></LinkItem>
              ))}
            </Links>
          </RobotBody>
        </RobotBlock>
      </LeftColumn>
      <TrendPanel>
        <TrendTitle><Text w={370}>Robot Framework Tests Trend (all tests)</Text></TrendTitle>
        <Card>
          <Chart />
          <Options>
            <CheckLabel>
              <CheckMark>
                <svg width="16" height="16" fill="none" stroke="#fff" strokeWidth="2.200"><path d="M3.500 8.500l3 3 6-7" /></svg>
              </CheckMark>
              <Text w={136}>Zoom to changes</Text>
            </CheckLabel>
            <CheckLabel><Check type="checkbox" /><Text w={128}>Show only failed</Text></CheckLabel>
            <CheckLabel><Check type="checkbox" /><Text w={135}>Show only critical</Text></CheckLabel>
            <MaxInput><Text w={17}>all</Text></MaxInput>
            <MaxLabel><Text w={83}>Max builds</Text></MaxLabel>
            <BiggerLink><Text w={155}>Show bigger image</Text></BiggerLink>
          </Options>
        </Card>
      </TrendPanel>
    </Columns>
    <PermalinksTitle><Text w={180.500}>Permalinks</Text></PermalinksTitle>
    <Links $indent={31} $top={13.4}>
      {permalinks.map(([label, w]) => (
        <LinkItem key={label}><Text w={w}>{label}</Text></LinkItem>
      ))}
    </Links>
  </Main>
);

const Arrow = () => (
  <svg width="10" height="6" fill="currentColor"><path d="M5 5.500L0 0h10z" /></svg>
);

const WindowsTaskbar = () => (
  <Taskbar>
    <StartButton>
      <svg width="20" height="20" fill="#fff"><path d="M0 3l8.500-1.200v7.700H0zM9.500 1.600L20 0v9.500H9.500zM0 10.500h8.500v7.700L0 17zM9.500 10.500H20V20L9.500 18.400z" /></svg>
    </StartButton>
    <TaskSearch>
      <svg width="22" height="22" fill="none" stroke="#e6e6e6" strokeWidth="1.500"><circle cx="14" cy="8" r="6.800" /><path d="M9 13l-7.500 7.500" /></svg>
      <Text w={164}>Type here to search</Text>
    </TaskSearch>
    <AppButton>
      <svg width="20" height="20" fill="none" stroke="#fff" strokeWidth="2.800"><circle cx="10" cy="10" r="8.200" /></svg>
    </AppButton>
    <AppButton>
      <svg width="22" height="20" fill="none" stroke="#fff" strokeWidth="1.300"><path d="M1 0v3.500h12V0M1.500 6h11v8.500h-11zM1 20v-3.500h12V20M18.500 0v5M18.500 10v10" /><path d="M17 6.500h3v3h-3z" fill="#fff" stroke="none" /></svg>
    </AppButton>
    {apps.map((a, i) => (
      <AppButton key={i} $running={a.running} $active={a.active}>{a.icon}</AppButton>
    ))}
    <Tray>
      <svg width="17" height="10" fill="none" stroke="#fff" strokeWidth="1.300"><path d="M.5 9.500l8-8 8 8" /></svg>
      <IconSlot $w={22} $ml={11}>
        <svg width="21" height="16" fill="none" stroke="#fff" strokeWidth="1.200"><path d="M6 4h12.500v9H4.500V9M19.500 6.500v4" /><path d="M8 6h9v5H6.500V9H8z" fill="#fff" /><path d="M1 3h5v3q-2.500 3-5 0zM2 0v3M5 0v3M3.500 8v2" /></svg>
      </IconSlot>
      <IconSlot $w={18} $ml={11}>
        <svg width="18" height="18" fill="none" stroke="#bbb" strokeWidth="1.300"><path d="M1 15Q2 2 16 1M5 16Q6 6 16 5.500M9 16q1-6 7-6.500" /><circle cx="14" cy="15" r="1.800" fill="#fff" stroke="none" /></svg>
      </IconSlot>
      <IconSlot $w={22} $ml={11}>
        <svg width="22" height="18" fill="none" stroke="#fff" strokeWidth="1.200"><path d="M1 6h3l4-4v14l-4-4H1zM11 7q1.500 2 0 4M14 4.500q3.500 4.500 0 9M17 2q5.500 7 0 14" /></svg>
      </IconSlot>
      <IconSlot $w={22} $ml={13}>
        <svg width="22" height="22" fill="none" stroke="#fff" strokeWidth="1.400"><path d="M6 18L15 2l3 1.500L9 19l-4 2zM6 11c-6 0-7 7-2 8 5 0 6-3 9-8M13 12c3 1 8-1 7-3s-2-2-3-1" /></svg>
      </IconSlot>
      <IconSlot $w={30} $h={30} $ml={16}><Text w={29}>ENG</Text></IconSlot>
      <Clock>
        <Text w={36}>23:36</Text>
        <Text w={69}>27/2/2564</Text>
      </Clock>
      <svg width="31" height="34" viewBox="0 0 31 34">
        <path d="M0 2h20v15H11l-5 6v-6H0z" fill="#fff" />
        <path d="M4 6.500h12M4 10h12M4 13.500h8" stroke="#333" strokeWidth="1.300" />
        <circle cx="19" cy="26" r="0" />
        <circle cx="19.500" cy="25" r="9.500" fill="#333" stroke="#888" strokeWidth="1.300" />
        <text x="19.500" y="30" textAnchor="middle" fontSize="13.500" fill="#fff" fontFamily="'Open Sans', sans-serif">8</text>
      </svg>
      <ShowDesktop />
    </Tray>
  </Taskbar>
);

export default function App() {
  return (
    <Screen>
      <GlobalStyle />
      <Browser />
      <Viewport>
        <Page>
          <PageHeader />
          <Breadcrumbs>
            <Text w={101.5}>Dashboard</Text>
            <CrumbArrow />
            <Text w={122}>Assignment1</Text>
            <CrumbArrow />
          </Breadcrumbs>
          <Body>
            <SidePanel />
            <Project />
          </Body>
        </Page>
        <Scrollbar>
          <ScrollArrow><Arrow /></ScrollArrow>
          <ScrollThumb />
          <ScrollArrow $down><Arrow /></ScrollArrow>
        </Scrollbar>
      </Viewport>
      <WindowsTaskbar />
    </Screen>
  );
}
